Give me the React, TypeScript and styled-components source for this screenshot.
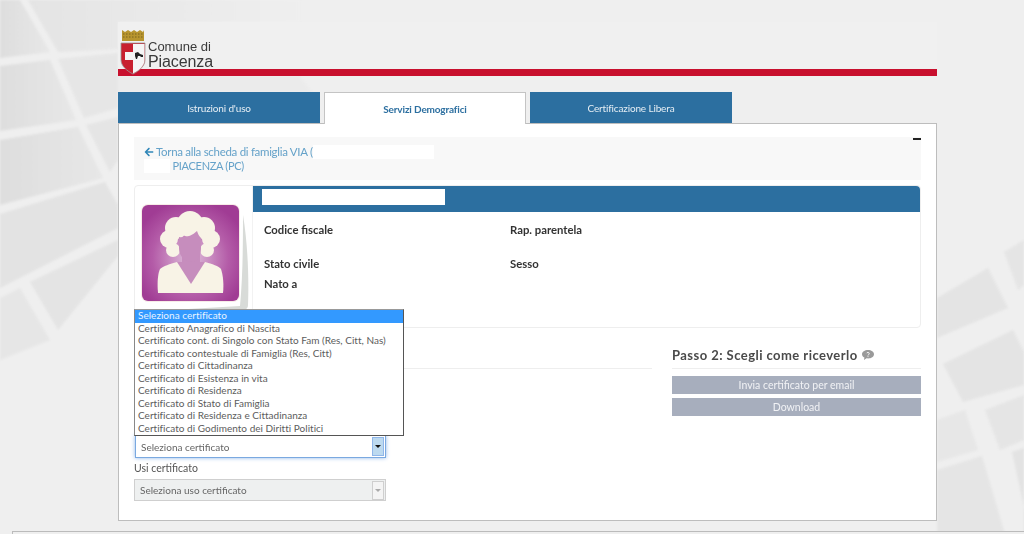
import { createGlobalStyle, styled } from "styled-components";
import { FaArrowLeft } from "react-icons/fa";

const GlobalStyle = createGlobalStyle`
  html, body {
    margin: 0;
    height: 534px;
    overflow: hidden;
    background: #efefef;
    font-family: Lato, "Open Sans", "Liberation Sans", sans-serif;
    color: #444;
  }
  * { box-sizing: border-box; }
`;

const Backdrop = styled.svg`
  position: fixed;
  left: 0;
  top: 0;
  width: 1024px;
  height: 534px;
  z-index: 0;
`;

const Page = styled.div`
  position: relative;
  z-index: 1;
  display: flex;
  flex-direction: column;
  padding: 22px 87px 0 118px;
`;

const Header = styled.header`
  height: 54px;
  background: #f0f0f0;
  border-bottom: 7px solid #c8102e;
  display: flex;
  align-items: flex-start;
  padding: 7px 0 0 2px;
`;

const CrestSvg = styled.svg`
  flex-shrink: 0;
`;

const LogoText = styled.div`
  display: flex;
  flex-direction: column;
  margin: 10px 0 0 2px;
  color: #3a3a3a;
  font-family: "Liberation Sans", sans-serif;
`;

const LogoTop = styled.span`
  font-size: 13px;
  line-height: 15px;
`;

const LogoBottom = styled.span`
  font-size: 16px;
  line-height: 16px;
  letter-spacing: -0.1px;
`;

const Tabs = styled.nav`
  display: flex;
  gap: 4px;
  margin-top: 16px;
  height: 31px;
  position: relative;
  z-index: 2;
`;

const Tab = styled.div<{ $active?: boolean }>`
  width: 202px;
  display: flex;
  align-items: center;
  justify-content: center;
  font-size: 10px;
  letter-spacing: -0.15px;
  font-weight: ${(p) => (p.$active ? 700 : 400)};
  color: ${(p) => (p.$active ? "#2c6fa0" : "#e6eef4")};
  background: ${(p) => (p.$active ? "#fff" : "#2c6fa0")};
  border: ${(p) => (p.$active ? "1px solid #c4c4c4" : "none")};
  border-bottom: none;
  margin-bottom: ${(p) => (p.$active ? "-1px" : "0")};
`;

const Panel = styled.main`
  position: relative;
  height: 398px;
  background: #fff;
  border: 1px solid #bdbdbd;
  padding: 13px 15px 0;
`;

const Minus = styled.i`
  position: absolute;
  top: 14px;
  right: 15px;
  width: 8px;
  height: 2px;
  background: #222;
`;

const Breadcrumb = styled.div`
  height: 43px;
  background: #f8f8f8;
  padding: 8px 10px;
  font-size: 11.5px;
  line-height: 14px;
  letter-spacing: -0.3px;
  color: #65a2c9;
`;

const BreadcrumbCity = styled.div`
  font-size: 11px;
`;

const BackIcon = styled(FaArrowLeft)`
  font-size: 10px;
  color: #2f86b8;
  margin-right: 2px;
  vertical-align: -1px;
`;

const Redacted = styled.span<{ $w: number }>`
  display: inline-block;
  width: ${(p) => p.$w}px;
  height: 14px;
  background: #fff;
  vertical-align: top;
`;

const Card = styled.section`
  display: flex;
  height: 143px;
  margin-top: 5px;
  border: 1px solid #eeeeee;
  border-radius: 4px;
`;

const PhotoCol = styled.div`
  width: 118px;
  padding: 17px 0 0 5px;
  border-right: 1px solid #f2f2f2;
`;

const CardBody = styled.div`
  flex: 1;
`;

const CardHead = styled.div`
  height: 26px;
  background: #2c6fa0;
  border-radius: 0 4px 0 0;
  padding: 3px 9px;
`;

const NameMask = styled.div`
  width: 183px;
  height: 16px;
  background: #fff;
`;

const Fields = styled.dl`
  margin: 0;
  padding: 11px 0 0 11px;
  display: grid;
  grid-template-columns: 246px 1fr;
  grid-template-rows: 34px 20px 20px;
  font-size: 11.3px;
  line-height: 14px;
  font-weight: 700;
  color: #333;
`;

const Steps = styled.div`
  display: flex;
  gap: 20px;
  margin-top: 15px;
`;

const StepLeft = styled.div`
  width: 518px;
`;

const StepRight = styled.div`
  flex: 1;
`;

const StepTitle = styled.h3`
  margin: 0;
  height: 26px;
  padding-top: 2px;
  font-size: 13px;
  line-height: 20px;
  font-weight: 700;
  letter-spacing: 0.45px;
  color: #4a4a4a;
  border-bottom: 1px solid #eeeeee;
  display: flex;
  align-items: flex-start;
  gap: 4px;
  white-space: nowrap;
`;

const HelpSvg = styled.svg`
  margin-top: 5px;
`;

const ActionButton = styled.button`
  display: block;
  width: 100%;
  height: 18px;
  margin-top: 4px;
  border: none;
  background: #a7aebd;
  color: #f1f2f5;
  font: 400 10.5px/18px Lato, sans-serif;
  padding: 0;
  &:first-of-type {
    margin-top: 7px;
  }
`;

const SelectBox = styled.div<{ $focused?: boolean }>`
  width: ${(p) => (p.$focused ? "251px" : "252px")};
  height: ${(p) => (p.$focused ? "23px" : "22px")};
  margin: ${(p) => (p.$focused ? "66px 0 0 1px" : "4px 0 0")};
  display: flex;
  align-items: center;
  justify-content: space-between;
  padding: 0 1px 0 5px;
  font-size: 10px;
  color: #666;
  background: ${(p) => (p.$focused ? "#fff" : "#eef0f0")};
  border: 1px solid ${(p) => (p.$focused ? "#7aa9e0" : "#cfcfcf")};
  box-shadow: ${(p) => (p.$focused ? "0 0 4px #8fb6ea" : "none")};
`;

const SelectArrow = styled.span<{ $focused?: boolean }>`
  width: 12px;
  height: 19px;
  display: flex;
  align-items: center;
  justify-content: center;
  background: ${(p) => (p.$focused ? "#bcd9ef" : "#f4f4f4")};
  border: 1px solid ${(p) => (p.$focused ? "#8fb6ea" : "#cfcfcf")};
  &::after {
    content: "";
    border-left: 3px solid transparent;
    border-right: 3px solid transparent;
    border-top: 3px solid ${(p) => (p.$focused ? "#111" : "#aaa")};
  }
`;

const UsiLabel = styled.label`
  display: block;
  margin-top: 3px;
  font-size: 10.5px;
  line-height: 14px;
  color: #555;
`;

const ListBox = styled.ul`
  position: absolute;
  left: 15px;
  top: 185px;
  width: 270px;
  height: 127px;
  margin: 0;
  padding: 0;
  list-style: none;
  background: #fff;
  border: 1px solid #555;
  border-left-color: #888;
  border-top-color: #999;
  z-index: 5;
`;

const ListOption = styled.li<{ $selected?: boolean }>`
  height: 12.5px;
  padding-left: 3px;
  font-size: 10px;
  line-height: 11.5px;
  white-space: nowrap;
  letter-spacing: 0.02px;
  color: ${(p) => (p.$selected ? "#eaf4ff" : "#5c5c5c")};
  background: ${(p) => (p.$selected ? "#3399ff" : "transparent")};
`;

const Footer = styled.div`
  margin: 10px -87px 0 -106px;
  height: 10px;
  background: #efefef;
  border-top: 1px solid #bbb;
  border-left: 1px solid #bbb;
`;

const certificates = [
  "Seleziona certificato",
  "Certificato Anagrafico di Nascita",
  "Certificato cont. di Singolo con Stato Fam (Res, Citt, Nas)",
  "Certificato contestuale di Famiglia (Res, Citt)",
  "Certificato di Cittadinanza",
  "Certificato di Esistenza in vita",
  "Certificato di Residenza",
  "Certificato di Stato di Famiglia",
  "Certificato di Residenza e Cittadinanza",
  "Certificato di Godimento dei Diritti Politici",
];

function BackgroundArt() {
  return (
    <Backdrop viewBox="0 0 1024 534">
      <defs>
        <linearGradient id="tile" x1="0" y1="0" x2="1" y2="0">
          <stop offset="0" stopColor="#dedede" />
          <stop offset="1" stopColor="#e7e7e7" />
        </linearGradient>
        <linearGradient id="tileTop" x1="0" y1="0" x2="1" y2="0">
          <stop offset="0" stopColor="#e4e4e4" />
          <stop offset="1" stopColor="#efefef" />
        </linearGradient>
        <filter id="soft">
          <feGaussianBlur stdDeviation="0.9" />
        </filter>
      </defs>
      <g filter="url(#soft)">
        <polygon points="0,0 20,0 50,52 0,58" fill="url(#tile)" />
        <polygon points="28,0 300,0 300,22 118,22 118,49 58,52" fill="url(#tileTop)" />
        <polygon points="0,66 50,60 76,120 0,131" fill="url(#tile)" />
        <polygon points="58,59 118,53 118,108 84,118" fill="#e6e6e6" />
        <polygon points="0,140 78,127 103,178 0,205" fill="url(#tile)" />
        <polygon points="86,125 118,117 118,160 110,172" fill="#e5e5e5" />
        <polygon points="0,214 105,182 118,205 118,228 0,288" fill="#e3e3e3" />
        <polygon points="0,298 20,288 50,340 0,360" fill="#e6e6e6" />
        <polygon points="30,282 118,240 118,256 58,330" fill="#e4e4e4" />
        <polygon points="118,76 300,76 312,92 118,92" fill="#ebebeb" />
        <polygon points="937,298 988,268 1008,308 937,338" fill="#e4e4e4" />
        <polygon points="1004,252 1024,240 1024,285 1018,290" fill="#e5e5e5" />
        <polygon points="943,364 1013,330 1024,352 1024,385 963,402" fill="#e4e4e4" />
        <polygon points="937,420 965,410 978,450 937,462" fill="#e7e7e7" />
        <polygon points="985,410 1024,395 1024,440 1000,450" fill="#e5e5e5" />
        <polygon points="937,470 982,456 1005,534 937,534" fill="#e5e5e5" />
        <polygon points="1012,452 1024,448 1024,534 1030,534" fill="#e3e3e3" />
      </g>
    </Backdrop>
  );
}

function Crest() {
  return (
    <CrestSvg width="26" height="46" viewBox="0 0 26 46">
      <path d="M2 1l3 2 3-2 3 2 3-2 3 2 3-2 3 2 1-2v11H2z" fill="#b8952f" />
      <path d="M3 5h20M3 8h20" stroke="#7a6420" strokeWidth="1" strokeDasharray="1.500 1.500" />
      <path d="M1 14h24v17c0 6-6 11-12 14C7 42 1 37 1 31z" fill="#c8202f" stroke="#9a9a9a" strokeWidth="0.8" />
      <path d="M13 15h11.500v16c0 6-5.500 10.500-11.500 13.500z" fill="#f5f5f5" />
      <rect x="5" y="23" width="8" height="8" fill="#f5f5f5" />
      <path d="M15 24l3-1 2 2 3 1v2h-2l-1-1h-2l-1 3h-1l-1-3z" fill="#222" />
    </CrestSvg>
  );
}

function Avatar() {
  return (
    <svg width="112" height="112" viewBox="0 0 112 112">
      <defs>
        <radialGradient id="avatarBg" cx="0.5" cy="0.55" r="0.6">
          <stop offset="0" stopColor="#e0c0dc" />
          <stop offset="0.65" stopColor="#b45ca8" />
          <stop offset="1" stopColor="#a03c94" />
        </radialGradient>
      </defs>
      <path d="M103 12c5 30 6 66 5 90 0 4-4 6-8 6H14l86-5c3-30 3-70 3-91z" fill="#d8dbd8" />
      <rect x="1" y="1" width="99" height="98" rx="7" fill="#f7ece8" />
      <rect x="2" y="2" width="97" height="96" rx="6" fill="url(#avatarBg)" />
      <path d="M18 90c-1-11 0-20 2-24 3-3 10-5 17-7h28c7 2 14 4 16 7 2 6 3 15 2 24z" fill="#f8f3e6" />
      <path d="M37 59h28L51 81z" fill="#c68dbd" />
      <rect x="42" y="46" width="18" height="18" fill="#c68dbd" />
      <circle cx="50" cy="21" r="13" fill="#f8f3e6" />
      <circle cx="36" cy="25" r="11" fill="#f8f3e6" />
      <circle cx="64" cy="25" r="11" fill="#f8f3e6" />
      <circle cx="29" cy="36" r="9" fill="#f8f3e6" />
      <circle cx="71" cy="36" r="9" fill="#f8f3e6" />
      <circle cx="33" cy="47" r="7" fill="#f8f3e6" />
      <circle cx="67" cy="47" r="7" fill="#f8f3e6" />
      <path d="M39 34c6 1 13-1 18-6 1 3 2 5 4 7v10c0 9-5 14-10 14s-12-5-12-14z" fill="#c68dbd" />
    </svg>
  );
}

function HelpBubble() {
  return (
    <HelpSvg width="12" height="10" viewBox="0 0 12 10">
      <path d="M6 0c3.300 0 6 1.800 6 4.200S9.300 8.400 6 8.400c-.5 0-1 0-1.500-.1L2 10l.4-2.500C1 6.800 0 5.600 0 4.200 0 1.800 2.700 0 6 0z" fill="#9a9a9a" />
      <path d="M4.600 3.200c.2-1 2.700-1 2.700.4 0 .9-1.300 1-1.300 1.900M6 6.200v.9" stroke="#fff" fill="none" strokeWidth="0.9" />
    </HelpSvg>
  );
}

export default function App() {
  return (
    <>
      <GlobalStyle />
      <BackgroundArt />
      <Page>
        <Header>
          <Crest />
          <LogoText>
            <LogoTop>Comune di</LogoTop>
            <LogoBottom>Piacenza</LogoBottom>
          </LogoText>
        </Header>
        <Tabs>
          <Tab>Istruzioni d'uso</Tab>
          <Tab $active>Servizi Demografici</Tab>
          <Tab>Certificazione Libera</Tab>
        </Tabs>
        <Panel>
          <Minus />
          <Breadcrumb>
            <BackIcon />
            Torna alla scheda di famiglia VIA (<Redacted $w={121} />
            <BreadcrumbCity>
              <Redacted $w={26} /> PIACENZA (PC)
            </BreadcrumbCity>
          </Breadcrumb>
          <Card>
            <PhotoCol>
              <Avatar />
            </PhotoCol>
            <CardBody>
              <CardHead>
                <NameMask />
              </CardHead>
              <Fields>
                <dt>Codice fiscale</dt>
                <dt>Rap. parentela</dt>
                <dt>Stato civile</dt>
                <dt>Sesso</dt>
                <dt>Nato a</dt>
              </Fields>
            </CardBody>
          </Card>
          <Steps>
            <StepLeft>
              <StepTitle />
              <SelectBox $focused>
                Seleziona certificato
                <SelectArrow $focused />
              </SelectBox>
              <UsiLabel>Usi certificato</UsiLabel>
              <SelectBox>
                Seleziona uso certificato
                <SelectArrow />
              </SelectBox>
            </StepLeft>
            <StepRight>
              <StepTitle>
                Passo 2: Scegli come riceverlo <HelpBubble />
              </StepTitle>
              <ActionButton>Invia certificato per email</ActionButton>
              <ActionButton>Download</ActionButton>
            </StepRight>
          </Steps>
          <ListBox>
            {certificates.map((name, i) => (
              <ListOption key={name} $selected={i === 0}>
                {name}
              </ListOption>
            ))}
          </ListBox>
        </Panel>
        <Footer />
      </Page>
    </>
  );
}
